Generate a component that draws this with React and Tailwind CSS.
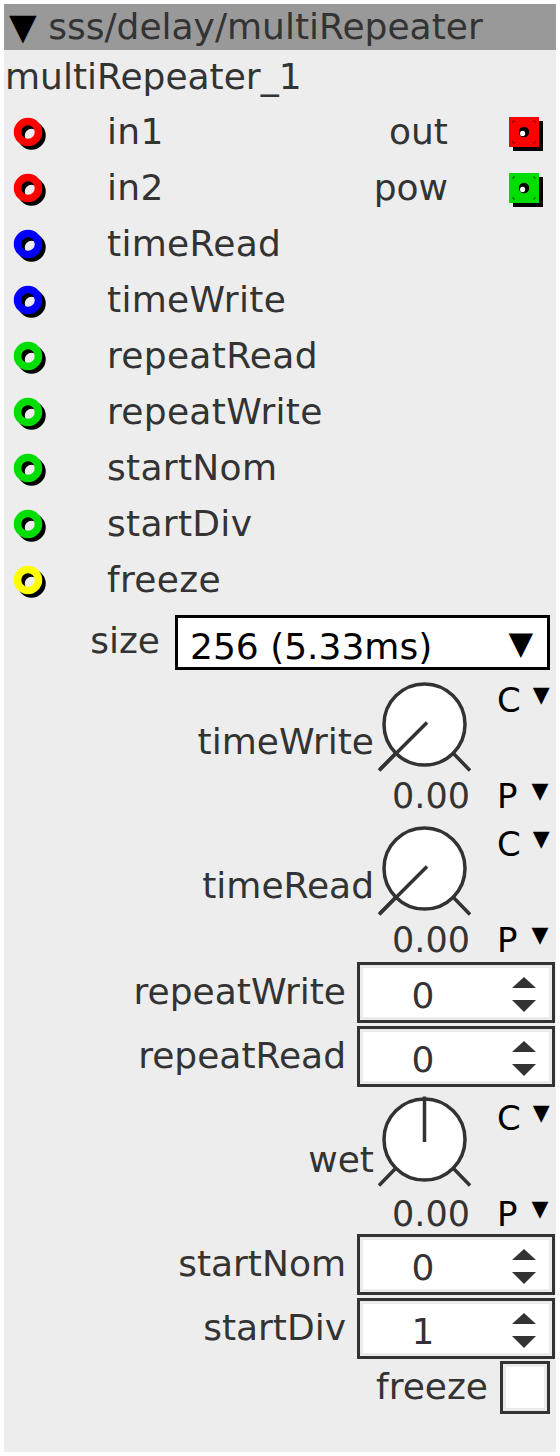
import React from "react";

const FONT = "font-['DejaVu_Sans',sans-serif]";

function Inlet({ color }) {
  return (
    <svg width="44" height="44" viewBox="0 0 44 44" className="block shrink-0">
      <circle cx="21.5" cy="25.5" r="10.5" fill="none" stroke="#000" strokeWidth="7.5" />
      <circle cx="18" cy="22" r="10.5" fill="none" stroke={color} strokeWidth="7.5" />
    </svg>
  );
}

function Outlet({ color }) {
  return (
    <svg width="44" height="42" viewBox="0 0 44 42" className="block shrink-0">
      <rect x="7" y="10" width="30" height="30" fill="#000" />
      <rect x="3" y="6" width="30" height="30" fill={color} />
      <g stroke="#000" strokeOpacity="0.55" strokeWidth="1" fill="none">
        <path d="M7 12 V10 H9" />
        <path d="M27 10 H29 V12" />
        <path d="M7 30 V32 H9" />
        <path d="M27 32 H29 V30" />
      </g>
      <circle cx="18" cy="21" r="5.2" fill="#000" />
      <circle cx="16.6" cy="22.4" r="2.6" fill="#fff" />
    </svg>
  );
}

function Knob({ mode }) {
  return (
    <svg width="96" height="96" viewBox="0 0 96 96" className="block">
      <circle cx="48.5" cy="44.5" r="40.5" fill="#fff" stroke="#333" strokeWidth="3.5" />
      <line x1="77.5" y1="73.5" x2="94" y2="90.5" stroke="#333" strokeWidth="3.5" />
      <line x1="19.5" y1="73.5" x2="3" y2="90.5" stroke="#333" strokeWidth="3.5" />
      {mode === "min" ? (
        <line x1="51" y1="42.5" x2="4" y2="89.5" stroke="#333" strokeWidth="3.5" />
      ) : (
        <line x1="48.5" y1="1.5" x2="48.5" y2="47" stroke="#333" strokeWidth="3.5" />
      )}
    </svg>
  );
}

function KnobBlock({ label, mode, padCls }) {
  return (
    <div className="flex justify-end h-[144px]">
      <div className="self-center mr-[2px]">{label}</div>
      <div className="w-[96px] flex flex-col justify-between">
        <div className={padCls}>
          <Knob mode={mode} />
        </div>
        <div className="text-[35px] leading-[36px] text-right pr-[2px] whitespace-nowrap">0.00</div>
      </div>
      <div className="w-[59px] ml-[25px] flex flex-col justify-between pt-[12px] text-black text-[34px] leading-[36px]">
        <div className="flex items-start">
          <span>C</span>
          <span className="text-[22px] leading-[22px] ml-[12px] mt-[2px]">▼</span>
        </div>
        <div className="flex items-start">
          <span>P</span>
          <span className="text-[22px] leading-[22px] ml-[14px] mt-[2px]">▼</span>
        </div>
      </div>
    </div>
  );
}

function Spinner() {
  return (
    <svg width="24" height="40" viewBox="0 0 24 40" className="block shrink-0">
      <polygon points="12,5 24,16 0,16" fill="#333" />
      <polygon points="0,28 24,28 12,40" fill="#333" />
    </svg>
  );
}

function NumBox({ label, value }) {
  return (
    <div className="flex justify-end items-center h-[64px]">
      <div className="mr-[11px]">{label}</div>
      <div className="w-[198px] h-[61px] mr-[1px] border-[3px] border-[#333] bg-white">
        <div className="h-full border-[3px] border-[#ebebeb] flex items-center">
          <div className="w-[120px] text-center pt-[7px]">{value}</div>
          <div className="ml-[29px]">
            <Spinner />
          </div>
        </div>
      </div>
    </div>
  );
}

export default function App() {
  const rows = [
    ["in1", "#ff0000", "out", "#ff0000"],
    ["in2", "#ff0000", "pow", "#00dd00"],
    ["timeRead", "#0000ff"],
    ["timeWrite", "#0000ff"],
    ["repeatRead", "#00dd00"],
    ["repeatWrite", "#00dd00"],
    ["startNom", "#00dd00"],
    ["startDiv", "#00dd00"],
    ["freeze", "#ffff00"],
  ];
  return (
    <div className={`bg-white min-h-[1456px] pt-[4px] pl-[4px] ${FONT}`}>
      <div className="w-[552px] bg-[#ededed] text-[#333] text-[36px] leading-[40px] pb-[38px]">
        <div className="h-[46px] bg-[#999999] flex items-center pl-[5px] whitespace-nowrap">
          <span className="text-black">▼</span>
          <span>&nbsp;sss/delay/multiRepeater</span>
        </div>
        <div className="h-[54px] flex items-center pl-[1px]">multiRepeater_1</div>
        {rows.map(([label, color, out, ocolor]) => (
          <div key={label} className="flex items-center h-[56px]">
            <div className="ml-[6px]">
              <Inlet color={color} />
            </div>
            <div className="ml-[53px] tracking-[0.3px]">{label}</div>
            {out && (
              <div className="ml-auto flex items-center">
                <div>{out}</div>
                <div className="ml-[58px] mr-[6px]">
                  <Outlet color={ocolor} />
                </div>
              </div>
            )}
          </div>
        ))}
        <div className="flex justify-end items-center h-[62px] pt-[7px]">
          <div className="mr-[15px] mb-[4px]">size</div>
          <div className="w-[375px] h-[55px] mr-[6px] border-[3px] border-black bg-white flex items-center justify-between pl-[12px] pr-[14px] text-black">
            <span className="pt-[8px]">256 (5.33ms)</span>
            <span className="text-[32px]">▼</span>
          </div>
        </div>
        <KnobBlock label="timeWrite" mode="min" padCls="pt-[10px]" />
        <KnobBlock label="timeRead" mode="min" padCls="pt-[10px]" />
        <div className="h-[2px]" />
        <NumBox label="repeatWrite" value="0" />
        <NumBox label="repeatRead" value="0" />
        <KnobBlock label="wet" mode="mid" padCls="pt-[7px]" />
        <NumBox label="startNom" value="0" />
        <NumBox label="startDiv" value="1" />
        <div className="flex justify-end items-center h-[54px]">
          <div className="mr-[12px]">freeze</div>
          <div className="w-[50px] h-[53px] mr-[6px] border-[3px] border-[#333] bg-white">
            <div className="h-full border-[3px] border-[#ebebeb]" />
          </div>
        </div>
      </div>
    </div>
  );
}
